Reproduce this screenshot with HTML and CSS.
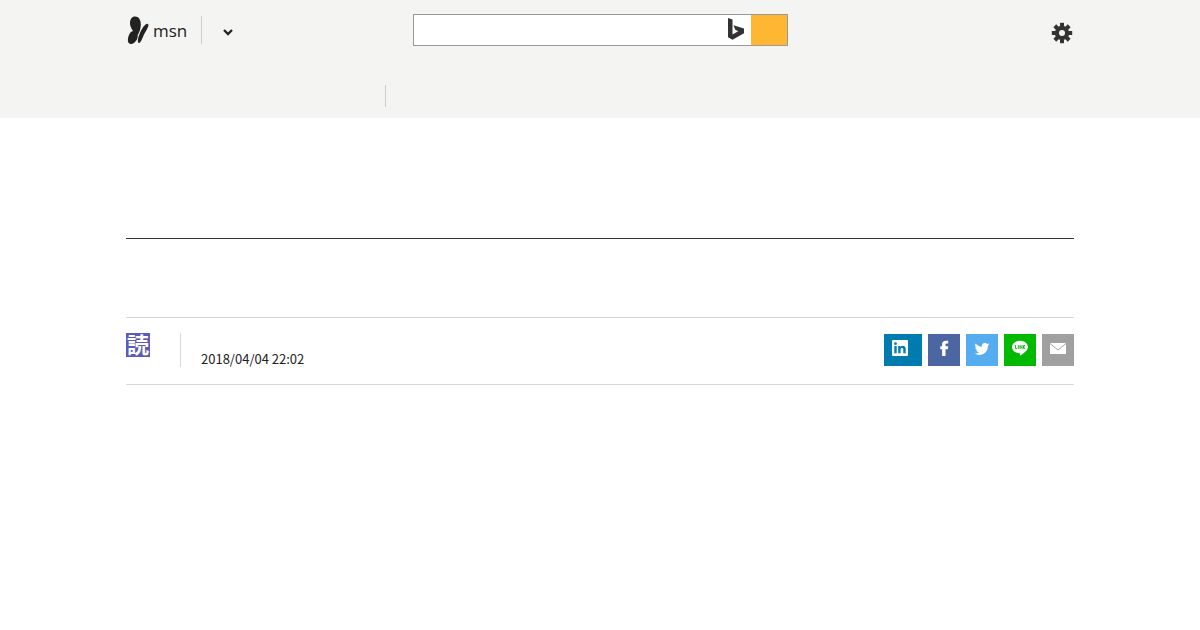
FILE: index.html
```html
<!DOCTYPE html>
<html lang="ja">
<head>
  <meta charset="UTF-8">
  <title>MSN</title>
  <link rel="stylesheet" href="styles.css">
</head>
<body>

  <header class="header">
    <div class="wrap topbar">
      <div class="brand">
        <a class="logo" href="#">
          <svg width="22" height="30" viewBox="0 0 22 30" aria-hidden="true">
            <path d="M10.800 20C7 17.500 3 13.500 3 8C3 4 5 1.500 8 1.500C11.800 1.500 13.800 5 13.800 9.500C13.800 13.500 12.600 16.500 10.800 20Z"/>
            <path d="M10.600 19.500C11.200 22.500 10 25.500 7.500 27.500C5 29.700 1.500 29.500 1 26.500C.5 22.500 2.500 16.500 6 16C8 16 10 17.500 10.600 19.500Z"/>
            <path d="M12.400 19.500C14 15 17 10 19.500 9C21.500 8.300 21.800 10 21 12C19.800 15 18.200 17.200 17 19.500C15.500 23 14 27.500 12 28C10.300 28.200 10.800 23 12.400 19.500Z"/>
          </svg>
          <span>msn</span>
        </a>
        <button class="menu-btn" type="button" aria-label="メニュー">
          <svg width="12" height="8" viewBox="0 0 12 8"><path d="M2 2l4 4 4-4" fill="none" stroke="#222" stroke-width="2.300"/></svg>
        </button>
      </div>

      <form class="search">
        <input type="text" aria-label="検索">
        <svg class="bing" width="18" height="24" viewBox="0 1 18 24" aria-hidden="true">
          <path d="M1 1l4.500 1.600v15l5.800-3.400-3-1.400-1.900-4.600L17 11.500v4.700L5.500 22.800 1 20.200z"/>
        </svg>
        <button type="submit" aria-label="ウェブ検索"></button>
      </form>

      <button class="settings" type="button" aria-label="設定">
        <svg width="22" height="22" viewBox="-11 -11 22 22">
          <path d="M-2-10.200h4v20.400h-4z"/>
          <path d="M-2-10.200h4v20.400h-4z" transform="rotate(45)"/>
          <path d="M-2-10.200h4v20.400h-4z" transform="rotate(90)"/>
          <path d="M-2-10.200h4v20.400h-4z" transform="rotate(135)"/>
          <circle r="7.200"/>
          <circle r="3" fill="#f4f4f2"/>
        </svg>
      </button>
    </div>

    <nav class="wrap nav">
      <div class="nav-home"></div>
    </nav>
  </header>

  <main class="wrap">
    <div class="section-head"></div>
    <div class="title"></div>

    <div class="info">
      <a class="source" href="#">読</a>
      <div class="published"><time datetime="2018-04-04T22:02">2018/04/04 22:02</time></div>

      <div class="share">
        <a class="linkedin" href="#" aria-label="LinkedIn">
          <svg width="16" height="16" viewBox="0 0 16 16">
            <path fill="#fff" d="M1 0h14a1 1 0 0 1 1 1v14a1 1 0 0 1-1 1H1a1 1 0 0 1-1-1V1a1 1 0 0 1 1-1z"/>
            <path fill="#007bb0" d="M2.300 6h2.400v7.300H2.300zM6.200 6h2.200v1c1.400-1.900 5.300-1.500 5.300 2v4.300h-2.400V9.700c0-2.200-2.700-2-2.700 0v3.600H6.200z"/>
            <circle cx="3.500" cy="3.700" r="1.400" fill="#007bb0"/>
          </svg>
        </a>
        <a class="facebook" href="#" aria-label="Facebook">
          <svg width="10" height="16" viewBox="-.5 -.5 10 16"><path fill="#fff" d="M2.600 15.500V8.700H.8V5.700h1.800V4C2.600 1.400 4 .2 6.300.2c1 0 1.800 0 2.400.1v2.600H7.300c-1.100 0-1.300.6-1.300 1.300v1.500h2.700l-.4 3H6v6.800z"/></svg>
        </a>
        <a class="twitter" href="#" aria-label="Twitter">
          <svg width="16" height="16" viewBox="-1 -2.500 26 26"><path fill="#fff" d="M24 4.600a10 10 0 0 1-2.800.8 5 5 0 0 0 2.200-2.700c-1 .6-2 1-3.100 1.200a4.900 4.900 0 0 0-8.400 4.500C7.700 8.200 4.100 6.200 1.700 3.200a4.900 4.900 0 0 0 1.500 6.600c-.8 0-1.600-.2-2.200-.6v.1c0 2.400 1.700 4.400 3.900 4.800-.7.200-1.500.2-2.200.1a4.900 4.900 0 0 0 4.600 3.400A9.900 9.900 0 0 1 0 19.500 14 14 0 0 0 21.500 7.100c1-.7 1.800-1.500 2.500-2.500z"/></svg>
        </a>
        <a class="line" href="#" aria-label="LINE">
          <svg width="16" height="16" viewBox="0 0 16 16">
            <path fill="#fff" d="M8 .8c4.400 0 8 2.800 8 6.300 0 3-3.200 5.700-7.500 8.400-.6.300-.8 0-.7-.6l.2-1.500C3.600 13.400 0 10.600 0 7.100S3.600.8 8 .8z"/>
            <path fill="none" stroke="#00b900" stroke-width=".9" d="M3.500 5v3.500H5M6.300 5v4M8 9V5.500l2 3V5M13 5.500h-1.500v3H13M11.500 7H13"/>
          </svg>
        </a>
        <a class="mail" href="#" aria-label="メール">
          <svg width="16" height="12" viewBox="0 0 16 12">
            <path fill="#fff" d="M0 1h16v11H0z"/>
            <path fill="none" stroke="#a0a0a0" d="M0 1.500l8 6.500 8-6.500"/>
          </svg>
        </a>
      </div>
    </div>
  </main>

</body>
</html>
```

FILE: styles.css
```css
* {
  box-sizing: border-box;
}
body {
  margin: 0;
  font-family: "Noto Sans", "Noto Sans CJK JP", sans-serif;
  color: #222;
  background-color: #fff;
}
.wrap {
  max-width: 948px;
  margin: 0 auto;
}
svg {
  display: block;
}

/* header */
.header {
  background-color: #f4f4f2;
  padding: 14px 0 11px;
}
.topbar {
  display: grid;
  grid-template-columns: 1fr 375px 1fr;
}
.brand {
  display: flex;
  align-items: center;
}
.logo {
  display: flex;
  align-items: center;
  gap: 4px;
  height: 28px;
  padding: 0 14px 0 1px;
  border-right: 1px solid #ccc;
  color: #222;
  font-family: "Open Sans", "Noto Sans", sans-serif;
  font-size: 17px;
  text-decoration: none;
}
.menu-btn,
.settings {
  border: none;
  background: none;
  cursor: pointer;
}
.menu-btn {
  padding: 4px 20px 0;
}
.settings {
  justify-self: end;
  padding: 5px 1px 0;
}
.logo svg {
  fill: #222;
}
.settings svg,
.bing {
  fill: #333;
}
.search {
  display: flex;
  align-items: center;
  height: 32px;
  border: 1px solid #999;
  background-color: #fff;
}
.search input {
  flex: 1;
  min-width: 0;
  height: 30px;
  padding: 0 10px;
  border: none;
  outline: none;
  font-size: 15px;
}
.bing {
  margin-right: 6px;
}
.search button {
  width: 36px;
  height: 30px;
  border: none;
  background-color: #ffb632;
  cursor: pointer;
}
.nav {
  padding-top: 39px;
}
.nav-home {
  width: 260px;
  height: 22px;
  border-right: 1px solid #ccc;
}

/* article */
.section-head {
  height: 121px;
  border-bottom: 1px solid #333;
}
.title {
  height: 78px;
}
.info {
  display: flex;
  align-items: flex-start;
  padding: 15px 0 17px;
  border-top: 1px solid #d8d8d8;
  border-bottom: 1px solid #d8d8d8;
}
.source {
  width: 24px;
  height: 24px;
  background-color: #5c5cb8;
  color: #fff;
  font-family: "Noto Sans CJK JP", sans-serif;
  font-size: 22px;
  font-weight: bold;
  line-height: 20px;
  text-align: center;
  text-decoration: none;
}
.published {
  display: flex;
  align-items: flex-end;
  height: 34px;
  margin-left: 30px;
  padding-left: 20px;
  border-left: 1px solid #d8d8d8;
  font-family: "Noto Sans CJK JP", sans-serif;
  font-size: 13px;
  line-height: 16px;
}
.share {
  display: flex;
  gap: 6px;
  margin-left: auto;
  padding-top: 1px;
}
.share a {
  display: flex;
  align-items: center;
  justify-content: center;
  width: 32px;
  height: 32px;
  padding-bottom: 4px;
}
.share .linkedin {
  width: 38px;
  padding-right: 6px;
  background-color: #007bb0;
}
.share .facebook {
  background-color: #4c66a4;
}
.share .twitter {
  background-color: #55acee;
}
.share .line {
  background-color: #00b900;
}
.share .mail {
  background-color: #a0a0a0;
}
```
